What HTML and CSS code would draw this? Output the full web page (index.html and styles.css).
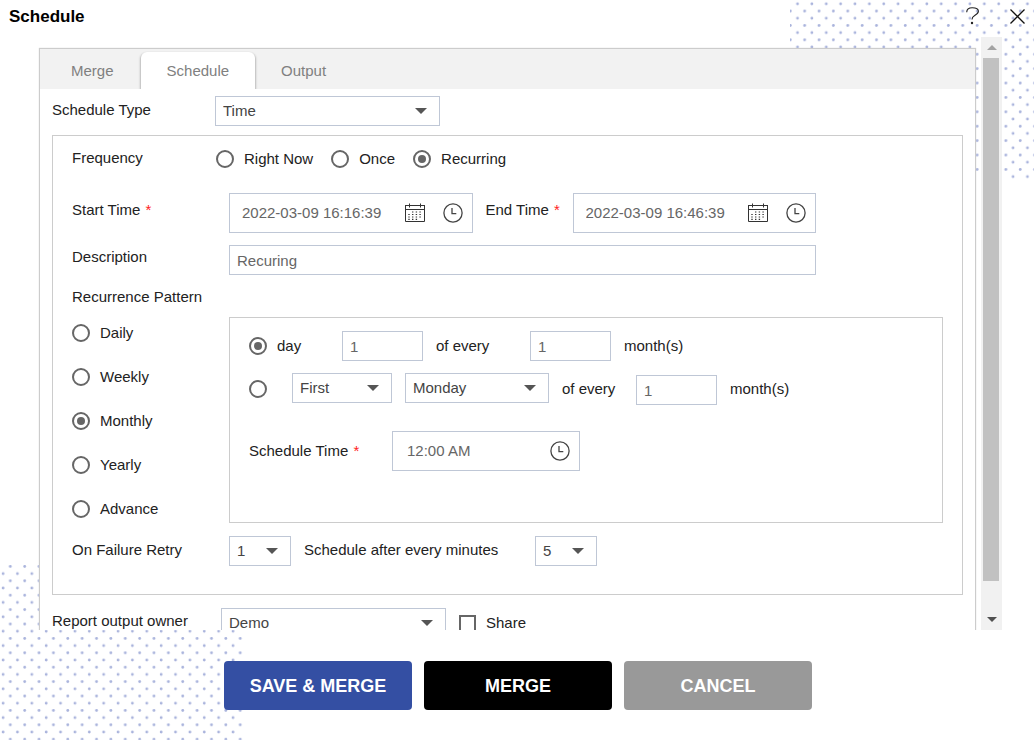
FILE: index.html
```html
<!DOCTYPE html>
<html lang="en">
<head>
<meta charset="utf-8">
<title>Schedule</title>
<link rel="stylesheet" href="styles.css">
</head>
<body>
<svg class="sprite" aria-hidden="true">
  <defs>
    <pattern id="dots" width="14.37" height="14.4" patternUnits="userSpaceOnUse">
      <circle cx="7.5" cy="3.8" r="1.4" fill="#a9b3dc"/>
      <circle cx="0.3" cy="11" r="1.4" fill="#a9b3dc"/>
      <circle cx="14.67" cy="11" r="1.4" fill="#a9b3dc"/>
    </pattern>
    <pattern id="dots-low" width="14.37" height="14.4" patternUnits="userSpaceOnUse">
      <circle cx="10.3" cy="1.5" r="1.4" fill="#a9b3dc"/>
      <circle cx="3.1" cy="8.7" r="1.4" fill="#a9b3dc"/>
    </pattern>
    <symbol id="calendar" viewBox="0 0 20 20">
      <g fill="none" stroke="#333" stroke-width="1">
        <path d="M.5 2.5V18.5H19.5V2.5"/>
        <path d="M0 2.5H20M0 6.5H20M4.5 .5V4.5M15.5 .5V4.5"/>
        <path stroke-width="1.2" stroke-dasharray="1.4 2.3" d="M7 9H17M3.3 11.5H17M3.3 14H17M3.3 16.4H13"/>
      </g>
    </symbol>
    <symbol id="clock" viewBox="0 0 20 20">
      <g fill="none" stroke="#444" stroke-width="1.3">
        <circle cx="10" cy="10" r="9.1"/>
        <path d="M9 5V10.6H13.3"/>
      </g>
    </symbol>
  </defs>
</svg>
<svg class="dots dots-top" aria-hidden="true"><rect width="100%" height="100%" fill="url(#dots)"/></svg>
<svg class="dots dots-bottom" aria-hidden="true"><rect width="100%" height="100%" fill="url(#dots-low)"/></svg>

<div class="dialog">
  <header class="header">
    <h1 class="title">Schedule</h1>
    <div class="header-actions">
      <button class="icon-button" type="button" aria-label="Help">
        <svg width="14" height="18" viewBox="0 0 14 18" fill="none" stroke="#222" stroke-width="1.1"><path d="M.7 5.2C.8 2.2 3 .7 6.2 .7C10 .7 12.4 1.8 12.4 4.3C12.4 6.4 11 7.2 8.7 8.5C6.6 9.7 6 10.4 6 12.5"/><circle cx="6" cy="16" r="1.2" fill="#222" stroke="none"/></svg>
      </button>
      <button class="icon-button" type="button" aria-label="Close">
        <svg width="15" height="15" viewBox="0 0 15 15" fill="none" stroke="#111" stroke-width="1.3"><path d="M.5 .5L14.5 14.5M14.5 .5L.5 14.5"/></svg>
      </button>
    </div>
  </header>

  <div class="viewport">
    <main class="panel">
      <nav class="tabs" role="tablist">
        <button class="tab" type="button" role="tab">Merge</button>
        <button class="tab tab-active" type="button" role="tab" aria-selected="true">Schedule</button>
        <button class="tab" type="button" role="tab">Output</button>
      </nav>
      <form class="form" id="schedule-form">
        <div class="type-row">
          <label class="label" for="type">Schedule Type</label>
          <span class="select select-wide"><select id="type"><option>Time</option></select></span>
        </div>

        <section class="box">
          <div class="row frequency">
            <span class="label" id="freq">Frequency</span>
            <div class="radios" role="radiogroup" aria-labelledby="freq">
              <label class="choice"><input type="radio" name="freq">Right Now</label>
              <label class="choice"><input type="radio" name="freq">Once</label>
              <label class="choice"><input type="radio" name="freq" checked>Recurring</label>
            </div>
          </div>

          <div class="row times">
            <label class="label" for="start">Start Time <span class="req">*</span></label>
            <div class="time-fields">
              <span class="picker">
                <input id="start" type="text" value="2022-03-09 16:16:39">
                <button type="button" aria-label="Pick start date"><svg width="20" height="20"><use href="#calendar"/></svg></button>
                <button type="button" aria-label="Pick start time"><svg width="20" height="20"><use href="#clock"/></svg></button>
              </span>
              <label class="label end-label" for="end">End Time <span class="req">*</span></label>
              <span class="picker">
                <input id="end" type="text" value="2022-03-09 16:46:39">
                <button type="button" aria-label="Pick end date"><svg width="20" height="20"><use href="#calendar"/></svg></button>
                <button type="button" aria-label="Pick end time"><svg width="20" height="20"><use href="#clock"/></svg></button>
              </span>
            </div>
          </div>

          <div class="row description">
            <label class="label" for="desc">Description</label>
            <input class="input" id="desc" type="text" value="Recuring">
          </div>

          <h2 class="label pattern-title" id="pattern">Recurrence Pattern</h2>
          <div class="row pattern">
            <div class="pattern-list" role="radiogroup" aria-labelledby="pattern">
              <label class="choice"><input type="radio" name="pattern">Daily</label>
              <label class="choice"><input type="radio" name="pattern">Weekly</label>
              <label class="choice"><input type="radio" name="pattern" checked>Monthly</label>
              <label class="choice"><input type="radio" name="pattern">Yearly</label>
              <label class="choice"><input type="radio" name="pattern">Advance</label>
            </div>
            <div class="box monthly">
              <div class="line">
                <label class="choice day-choice"><input type="radio" name="monthly" checked>day</label>
                <input class="input input-small" type="text" value="1" aria-label="Day of month">
                <span class="every every-day">of every</span>
                <input class="input input-small" type="text" value="1" aria-label="Number of months">
                <span>month(s)</span>
              </div>
              <div class="line week-line">
                <label class="choice ordinal-choice"><input type="radio" name="monthly" aria-label="Weekday of month"></label>
                <span class="select select-ordinal"><select aria-label="Ordinal"><option>First</option></select></span>
                <span class="select select-weekday"><select aria-label="Weekday"><option>Monday</option></select></span>
                <span class="every every-week">of every</span>
                <input class="input input-small" type="text" value="1" aria-label="Number of months">
                <span>month(s)</span>
              </div>
              <div class="line time-line">
                <label class="label time-label" for="time">Schedule Time <span class="req">*</span></label>
                <span class="picker picker-short">
                  <input id="time" type="text" value="12:00 AM">
                  <button type="button" aria-label="Pick time"><svg width="20" height="20"><use href="#clock"/></svg></button>
                </span>
              </div>
            </div>
          </div>

          <div class="row retry">
            <label class="label" for="retry">On Failure Retry</label>
            <div class="retry-fields">
              <span class="select select-tiny"><select id="retry"><option>1</option></select></span>
              <label class="label retry-label" for="minutes">Schedule after every minutes</label>
              <span class="select select-tiny"><select id="minutes"><option>5</option></select></span>
            </div>
          </div>
        </section>

        <div class="owner-row">
          <label class="label" for="owner">Report output owner</label>
          <span class="select select-wide"><select id="owner"><option>Demo</option></select></span>
          <label class="choice share"><input type="checkbox">Share</label>
        </div>
      </form>
    </main>
    <div class="scrollbar">
      <button class="scroll-button up" type="button" aria-label="Scroll up"></button>
      <div class="track"><div class="thumb"></div></div>
      <button class="scroll-button down" type="button" aria-label="Scroll down"></button>
    </div>
  </div>

  <footer class="footer">
    <button class="action save" type="submit" form="schedule-form">SAVE &amp; MERGE</button>
    <button class="action merge" type="button">MERGE</button>
    <button class="action cancel" type="button">CANCEL</button>
  </footer>
</div>
</body>
</html>
```
FILE: styles.css
```css
* { box-sizing: border-box; }

body {
  margin: 0;
  background: #fff;
  color: #222;
  font: 15px/20px "Liberation Sans", Arial, sans-serif;
}

button, input, select { font: inherit; color: inherit; }
button { padding: 0; border: 0; background: none; }
svg { display: block; }

.sprite { position: absolute; width: 0; height: 0; }

.dots { position: absolute; z-index: -1; }
.dots-top { top: 0; right: 0; width: 244px; height: 182px; }
.dots-bottom { bottom: 0; left: 0; width: 243px; height: 175px; }

.dialog {
  display: flex;
  flex-direction: column;
  height: 100vh;
  overflow: hidden;
}

.header {
  display: flex;
  justify-content: space-between;
  align-items: flex-start;
  flex: none;
  height: 37px;
  padding: 7px 9px 0;
}
.title { margin: 0; color: #000; font-size: 17px; line-height: 20px; }
.header-actions { display: flex; gap: 30px; }

/* Scrolling area */
.viewport {
  display: flex;
  flex: 1;
  gap: 5px;
  min-height: 0;
  padding: 0 32px 0 39px;
  overflow: hidden;
}
.panel {
  flex: 1;
  align-self: flex-start;
  min-width: 0;
  margin-top: 11px;
  border: 1px solid #ccc;
  background: #fff;
  box-shadow: 0 0 1px #ccc;
}
.scrollbar {
  display: flex;
  flex-direction: column;
  flex: none;
  width: 21px;
  background: #f1f1f1;
}
.scroll-button { display: grid; place-items: center; height: 21px; }
.scroll-button::before { content: ""; border: 5px solid transparent; }
.up::before { border-top-width: 0; border-bottom-color: #a3a3a3; }
.down::before { border-bottom-width: 0; border-top-color: #505050; }
.track { flex: 1; padding: 0 3px 0 2px; }
.thumb { height: 95%; background: #c1c1c1; }

/* Tabs */
.tabs {
  display: flex;
  align-items: flex-end;
  height: 40px;
  padding: 0 5px;
  overflow: hidden;
  background: #f2f2f2;
}
.tab { height: 37px; padding: 0 26px; color: #808080; }
.tab-active {
  margin-left: 1px;
  border-radius: 6px 6px 0 0;
  background: #fff;
  box-shadow: -1px 1px 2px #bbb, 1px 1px 2px #bbb;
}

/* Form */
.form { padding: 7px 12px; }
.label { font-size: 15px; font-weight: normal; line-height: 20px; }
.req { margin-left: 1px; color: #f22; }
.type-row, .owner-row { display: flex; }
.type-row .label { flex: none; width: 163px; padding-top: 4px; }

.box { border: 1px solid #ccc; }
.form > .box { margin-top: 9px; padding: 12px 19px 28px; }
.row { display: grid; grid-template-columns: 157px 1fr; align-items: start; }

.frequency { grid-template-columns: 144px 1fr; }
.radios { display: flex; gap: 18px; padding-top: 1px; }
.choice { display: flex; align-items: center; gap: 10px; }
.choice input { flex: none; margin: 0; appearance: none; border: 2px solid #666; background: #fff; }
.choice input[type="radio"] { display: grid; place-items: center; width: 18px; height: 18px; border-radius: 50%; }
.choice input[type="radio"]:checked::before {
  content: "";
  width: 8px;
  height: 8px;
  border-radius: 50%;
  background: #666;
}
.choice input[type="checkbox"] { width: 17px; height: 17px; }

.input, .picker, .select { border: 1px solid #bfc7d6; background: #fff; }
.input { width: 100%; height: 30px; padding: 0 7px; color: #666; }

.times { margin-top: 24px; }
.times .label { padding-top: 7px; }
.time-fields { display: flex; max-width: 587px; }
.time-fields .end-label { flex: none; width: 100px; padding-left: 13px; }
.picker {
  display: flex;
  flex: 1;
  align-items: center;
  gap: 18px;
  min-width: 0;
  height: 40px;
  padding: 0 9px 0 12px;
}
.picker input { flex: 1; width: 0; min-width: 0; padding: 0; border: 0; outline: 0; background: none; color: #666; }

.description { margin-top: 12px; }
.description .label { padding-top: 2px; }
.description .input { max-width: 587px; }

.pattern-title { margin: 12px 0 10px; }
.pattern-list { display: grid; gap: 24px; padding-top: 6px; }
.monthly { min-height: 206px; padding: 13px 19px; }
.line { display: flex; align-items: center; gap: 13px; }
.week-line { height: 32px; margin-top: 12px; }
.week-line .select { align-self: flex-start; }
.week-line .input { align-self: flex-end; }
.time-line { margin-top: 26px; }
.day-choice { width: 80px; }
.ordinal-choice { width: 30px; }
.line .input-small { flex: none; width: 81px; }
.every-day { width: 81px; }
.every-week { width: 61px; }
.time-label { flex: none; width: 130px; }
.picker-short { flex: none; width: 188px; padding-left: 14px; }

.select { display: flex; position: relative; flex: none; height: 30px; }
.select select {
  width: 100%;
  padding: 0 7px;
  border: 0;
  outline: 0;
  appearance: none;
  background: none;
  color: #444;
}
.select::after {
  content: "";
  position: absolute;
  top: 11px;
  right: 12px;
  border: 6px solid transparent;
  border-top-color: #555;
  border-bottom-width: 0;
  pointer-events: none;
}
.select-wide { width: 225px; }
.select-ordinal { width: 100px; }
.select-weekday { width: 144px; }
.select-tiny { width: 62px; }

.retry { margin-top: 13px; }
.retry > .label { padding-top: 4px; }
.retry-fields { display: flex; }
.retry-label { width: 244px; padding: 4px 0 0 13px; }

.owner-row { margin-top: 13px; }
.owner-row > .label:first-child { flex: none; width: 169px; padding-top: 3px; }
.share { margin-left: 13px; }

/* Footer */
.footer {
  display: flex;
  flex: none;
  justify-content: center;
  gap: 12px;
  height: 110px;
  padding: 31px 14px 30px 16px;
}
.action { width: 188px; border-radius: 4px; color: #fff; font-size: 18px; font-weight: bold; }
.save { background: #344fa3; }
.merge { background: #000; }
.cancel { background: #999; }
```
